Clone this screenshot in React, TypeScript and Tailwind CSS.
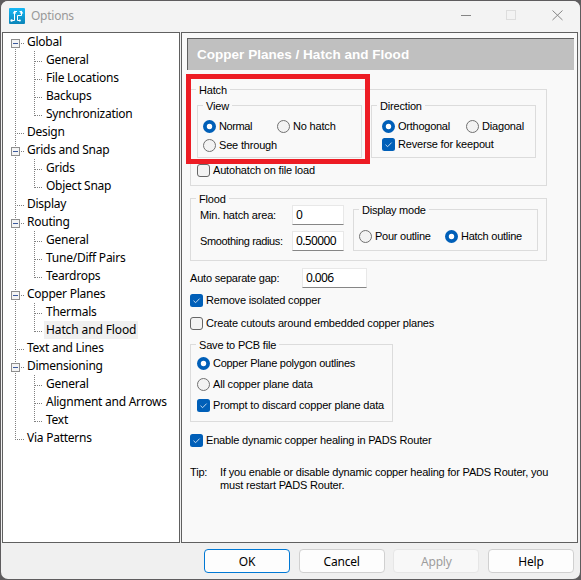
import type { ReactNode } from "react";

type NodeKind = "open" | "leaf" | "child";
type TreeNode = { label: string; kind: NodeKind; last?: boolean; first?: boolean; selected?: boolean };

const nodes: TreeNode[] = [
  { label: "Global", kind: "open", first: true },
  { label: "General", kind: "child" },
  { label: "File Locations", kind: "child" },
  { label: "Backups", kind: "child" },
  { label: "Synchronization", kind: "child", last: true },
  { label: "Design", kind: "leaf" },
  { label: "Grids and Snap", kind: "open" },
  { label: "Grids", kind: "child" },
  { label: "Object Snap", kind: "child", last: true },
  { label: "Display", kind: "leaf" },
  { label: "Routing", kind: "open" },
  { label: "General", kind: "child" },
  { label: "Tune/Diff Pairs", kind: "child" },
  { label: "Teardrops", kind: "child", last: true },
  { label: "Copper Planes", kind: "open" },
  { label: "Thermals", kind: "child" },
  { label: "Hatch and Flood", kind: "child", last: true, selected: true },
  { label: "Text and Lines", kind: "leaf" },
  { label: "Dimensioning", kind: "open" },
  { label: "General", kind: "child" },
  { label: "Alignment and Arrows", kind: "child" },
  { label: "Text", kind: "child", last: true },
  { label: "Via Patterns", kind: "leaf", last: true },
];

function Branch({ node }: { node: TreeNode }) {
  const child = node.kind === "child";
  const end = node.last && !child ? 11 : 18;
  return (
    <svg
      width={child ? 41 : 22}
      height="18"
      viewBox={child ? "0 0 41 18" : "0 0 22 18"}
      className="shrink-0"
      shapeRendering="crispEdges"
      stroke="#808080"
      strokeDasharray="1 1"
      fill="none"
    >
      <path d={node.first ? "M12.5 16V18" : `M12.5 0V${end}`} />
      {child && <path d={node.last ? "M31.5 0V11" : "M31.5 0V18"} />}
      <path d={child ? "M32 10.5H40" : "M12 10.5H22"} />
      {node.kind === "open" && (
        <g strokeDasharray="none">
          <rect x="8.5" y="6.5" width="8" height="8" fill="#f4f4f4" stroke="#8e8e8e" />
          <path d="M10 10.5H15" stroke="#3c5a9c" />
        </g>
      )}
    </svg>
  );
}

function Tree() {
  return (
    <div className="h-[511px] w-[178px] shrink-0 border border-[#606060] bg-white">
      {nodes.map((n, i) => (
        <div key={i} className="flex h-[18px]">
          <Branch node={n} />
          <span
            className={`h-[18px] whitespace-nowrap pl-[2px] font-['Noto_Sans',sans-serif] text-[12px] leading-[17px] ${n.selected ? "bg-[#f0f0f0] pr-[2px] tracking-[-0.12px]" : "tracking-[-0.25px]"}`}
          >
            {n.label}
          </span>
        </div>
      ))}
    </div>
  );
}

function Radio({ label, on, className = "" }: { label: string; on?: boolean; className?: string }) {
  return (
    <label className={`flex h-[13px] items-center gap-[3px] whitespace-nowrap ${className}`}>
      <svg width="13" height="13" viewBox="0 0 13 13" className="shrink-0">
        {on ? (
          <>
            <circle cx="6.5" cy="6.5" r="6.5" fill="#005fb8" />
            <circle cx="6.5" cy="6.5" r="2.7" fill="#fff" />
          </>
        ) : (
          <circle cx="6.5" cy="6.5" r="6" fill="#f3f3f3" stroke="#707070" />
        )}
      </svg>
      <span>{label}</span>
    </label>
  );
}

function Check({ label, on, className = "" }: { label: string; on?: boolean; className?: string }) {
  return (
    <label className={`flex h-[13px] items-center gap-[3px] whitespace-nowrap ${className}`}>
      <svg width="13" height="13" viewBox="0 0 13 13" className="shrink-0">
        {on ? (
          <>
            <rect width="13" height="13" rx="2.5" fill="#005fb8" />
            <path d="M3.5 6.7L5.6 8.7L9.6 4.6" fill="none" stroke="#d5e6f5" strokeWidth="0.9" />
          </>
        ) : (
          <rect x="0.5" y="0.5" width="12" height="12" rx="2.5" fill="#f3f3f3" stroke="#666" />
        )}
      </svg>
      <span>{label}</span>
    </label>
  );
}

function Group({ title, className = "", children }: { title: string; className?: string; children: ReactNode }) {
  return (
    <section className={`flex flex-col border border-[#dcdcdc] ${className}`}>
      <h2 className="-mt-[7px] ml-[5px] h-[14px] w-fit shrink-0 bg-[#f9f9f9] px-[3px] leading-[14px] whitespace-nowrap">
        {title}
      </h2>
      {children}
    </section>
  );
}

function Field({ value, className = "" }: { value: string; className?: string }) {
  return (
    <div
      className={`h-[20px] shrink-0 border border-[#e8e8e8] border-b-[#868686] bg-white pl-[3px] font-['Noto_Sans',sans-serif] text-[12px] leading-[18px] tracking-[-0.65px] ${className}`}
    >
      {value}
    </div>
  );
}

function Button({ label, className }: { label: string; className: string }) {
  return (
    <button
      className={`h-[24px] w-[86px] rounded-[4px] border text-center font-['Noto_Sans',sans-serif] text-[12px] leading-[21px] tracking-[-0.2px] ${className}`}
    >
      {label}
    </button>
  );
}

export default function App() {
  return (
    <div className="h-[580px] w-[581px] overflow-hidden bg-[#5e5c5e] p-px font-['Liberation_Sans',Arial,sans-serif] text-[11px] leading-[13px] tracking-[-0.18px] text-black">
      <div className="h-[578px] w-[579px] overflow-hidden rounded-[7px] bg-[#f0f0f0]">
        <header className="flex h-[31px] items-center bg-[#f3f3f3] pl-[8px]">
          <svg width="16" height="16" viewBox="0 0 16 16" className="-mt-px">
            <defs>
              <linearGradient id="logo" x1="0" y1="0" x2="0" y2="1">
                <stop offset="0" stopColor="#16b8f6" />
                <stop offset="1" stopColor="#0a84b8" />
              </linearGradient>
            </defs>
            <rect width="16" height="16" rx="1" fill="url(#logo)" />
            <path
              d="M2.5 12.5H5.5V3.5H8M8.5 12.5V7.5H12.5V3.5H10.500M8.5 12.5H10.5"
              fill="none"
              stroke="#fff"
              strokeWidth="1"
            />
            <g fill="#fff">
              <circle cx="2.6" cy="12.5" r="1.2" />
              <circle cx="10.8" cy="12.5" r="1.1" />
              <path d="M3.7 5.4L5.5 2.6L7.3 5.4ZM10.700 5.4L12.5 2.6L14.3 5.4Z" />
            </g>
          </svg>
          <h1 className="-mt-px ml-[6px] font-['Noto_Sans',sans-serif] text-[12px] leading-[18px] tracking-[-0.25px] text-[#999]">
            Options
          </h1>
          <svg width="104" height="12" viewBox="0 0 104 12" className="ml-auto mr-[15px] -mt-px" fill="none">
            <path d="M0 5.5H10" stroke="#858585" shapeRendering="crispEdges" />
            <rect x="45.5" y="0.5" width="9" height="9" stroke="#dddddd" />
            <path d="M91.5 0.5L101.5 10M101.5 0.5L91.5 10" stroke="#858585" />
          </svg>
        </header>

        <main className="flex gap-px pl-px">
          <Tree />
          <div className="relative h-[511px] w-[397px] shrink-0 border border-[#606060] bg-[#f9f9f9] pt-[5px]">
            <div className="ml-[5px] h-[32px] w-[387px] border-l border-t border-[#606060] bg-[#c0c0c0] pl-[9px] text-[13.5px] font-bold leading-[31px] tracking-[0.02px] text-white">
              Copper Planes / Hatch and Flood
            </div>

            <div className="ml-[8px] mt-[19px] flex w-[357px] flex-col">
              <Group title="Hatch" className="h-[97px] shrink-0">
                <div className="mt-[8px] ml-[6px] flex gap-[9px]">
                  <Group title="View" className="h-[53px] w-[165px]">
                    <div className="mt-[7px] ml-[5px] flex">
                      <Radio label="Normal" on className="w-[74px] tracking-[-0.4px]" />
                      <Radio label="No hatch" />
                    </div>
                    <Radio label="See through" className="mt-[6px] ml-[5px]" />
                  </Group>
                  <Group title="Direction" className="h-[53px] w-[165px]">
                    <div className="mt-[7px] ml-[10px] flex">
                      <Radio label="Orthogonal" on className="w-[84px] tracking-[-0.25px]" />
                      <Radio label="Diagonal" />
                    </div>
                    <Check label="Reverse for keepout" on className="mt-[5px] ml-[10px]" />
                  </Group>
                </div>
                <Check label="Autohatch on file load" className="mt-[6px] ml-[6px]" />
              </Group>

              <Group title="Flood" className="mt-[12px] h-[63px] shrink-0">
                <div className="-mt-px flex">
                  <div className="ml-[9px] w-[145px]">
                    <div className="flex h-[20px] items-center">
                      <span className="w-[92px] whitespace-nowrap tracking-[-0.18px]">Min. hatch area:</span>
                      <Field value="0" className="w-[52px]" />
                    </div>
                    <div className="mt-[6px] flex h-[20px] items-center">
                      <span className="w-[92px] whitespace-nowrap tracking-[-0.35px]">Smoothing radius:</span>
                      <Field value="0.50000" className="w-[52px]" />
                    </div>
                  </div>
                  <Group title="Display mode" className="mt-[4px] ml-[8px] h-[42px] w-[185px] tracking-[-0.25px]">
                    <div className="mt-[13px] ml-[5px] flex">
                      <Radio label="Pour outline" className="w-[86px]" />
                      <Radio label="Hatch outline" on />
                    </div>
                  </Group>
                </div>
              </Group>

              <div className="mt-[7px] flex h-[20px] items-center">
                <span className="w-[112px] whitespace-nowrap tracking-[-0.2px]">Auto separate gap:</span>
                <Field value="0.006" className="w-[65px]" />
              </div>
              <Check label="Remove isolated copper" on className="mt-[6px]" />
              <Check label="Create cutouts around embedded copper planes" className="mt-[10px]" />

              <Group title="Save to PCB file" className="mt-[14px] h-[78px] w-[203px] shrink-0">
                <Radio label="Copper Plane polygon outlines" on className="mt-[5px] ml-[6px] tracking-[-0.27px]" />
                <Radio label="All copper plane data" className="mt-[8px] ml-[6px]" />
                <Check label="Prompt to discard copper plane data" on className="mt-[8px] ml-[6px]" />
              </Group>

              <Check label="Enable dynamic copper healing in PADS Router" on className="mt-[12px]" />
              <div className="mt-[19px] flex whitespace-nowrap">
                <span className="w-[30px] shrink-0">Tip:</span>
                <p>
                  If you enable or disable dynamic copper healing for PADS Router, you
                  <br />
                  must restart PADS Router.
                </p>
              </div>
            </div>
            <div className="absolute left-[4px] top-[41px] h-[90px] w-[184px] border-[5px] border-[#ed1c24]" />
          </div>
        </main>

        <footer className="mt-[6px] flex gap-[8.67px] pl-[203px]">
          <Button label="OK" className="border-[#0078d4] bg-[#fdfdfd]" />
          <Button label="Cancel" className="border-[#d0d0d0] bg-[#fdfdfd]" />
          <Button label="Apply" className="border-[#e6e6e6] bg-[#f8f8f8] text-[#9d9d9d]" />
          <Button label="Help" className="border-[#d0d0d0] bg-[#fdfdfd]" />
        </footer>
      </div>
    </div>
  );
}
